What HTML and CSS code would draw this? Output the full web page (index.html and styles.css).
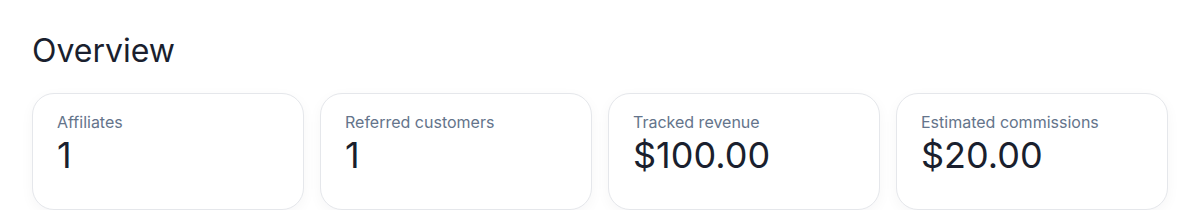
FILE: index.html
```html
<!DOCTYPE html>
<html lang="en">
<head>
    <meta charset="UTF-8">
    <title>Overview</title>
    <link rel="stylesheet" href="styles.css">
</head>
<body>
    <section class="overview">
        <h2 class="overview-title">Overview</h2>
        <div class="stat-grid">
            <div class="stat-card">
                <div class="stat-label">Affiliates</div>
                <div class="stat-value">1</div>
            </div>
            <div class="stat-card">
                <div class="stat-label">Referred customers</div>
                <div class="stat-value">1</div>
            </div>
            <div class="stat-card">
                <div class="stat-label">Tracked revenue</div>
                <div class="stat-value">$100.00</div>
            </div>
            <div class="stat-card">
                <div class="stat-label">Estimated commissions</div>
                <div class="stat-value">$20.00</div>
            </div>
        </div>
    </section>
</body>
</html>
```

FILE: styles.css
```css
* { margin: 0; padding: 0; box-sizing: border-box; }

body {
    background: #fff;
    font-family: Inter, "Noto Sans", sans-serif;
    color: #111827;
}

.overview {
    padding: 33px 32px 0;
}

.overview-title {
    font-size: 32px;
    line-height: 36px;
    font-weight: 400;
    color: #1a1f2e;
    margin-bottom: 24px;
}

.stat-grid {
    display: grid;
    grid-template-columns: repeat(4, 1fr);
    gap: 16px;
}

.stat-card {
    background: #fff;
    border: 1px solid #e5e7eb;
    border-radius: 22px;
    padding: 18px 24px;
    height: 117px;
    box-shadow: 0 4px 14px rgba(15, 23, 42, 0.04);
}

.stat-label {
    font-size: 16px;
    line-height: 20px;
    color: #64748b;
}

.stat-value {
    font-size: 36px;
    line-height: 40px;
    color: #1a1f2e;
    margin-top: 3px;
}
```
